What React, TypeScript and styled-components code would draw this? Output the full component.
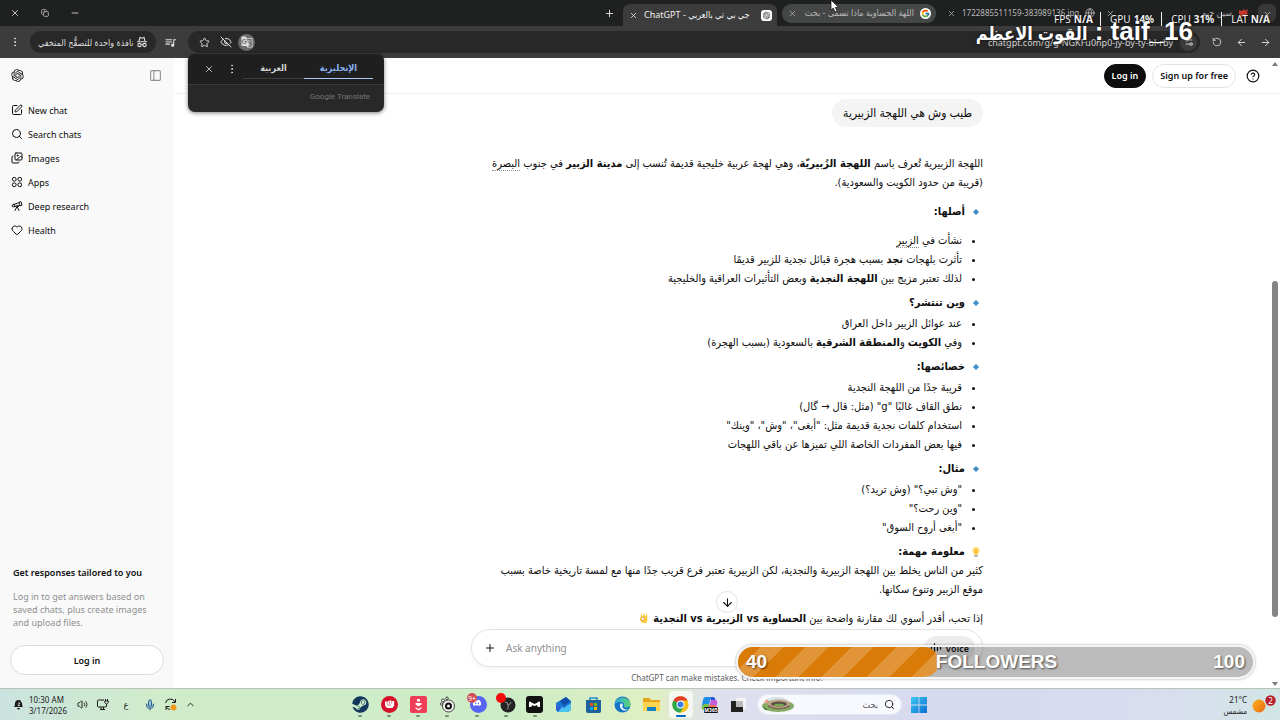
import React from "react";
import styled, { createGlobalStyle } from "styled-components";
import {
  X, Plus, Minus, Copy, Star, EyeOff, RotateCcw, ArrowLeft, ArrowRight, ArrowDown, ChevronDown, ChevronUp,
  EllipsisVertical, SquarePen, Search, Images, PanelLeft, Telescope, Heart, CircleQuestionMark, Globe,
  Volume2, Mic, Settings2,
} from "lucide-react";
import { RiOpenaiFill } from "react-icons/ri";
import { FcGoogle } from "react-icons/fc";
import { FaSteam, FaDiscord } from "react-icons/fa";
import { MdQueueMusic, MdGTranslate } from "react-icons/md";

const GlobalStyle = createGlobalStyle`
  * { box-sizing: border-box; }
  body { margin: 0; background: #fff; color: #0d0d0d; font-family: "Noto Sans", "DejaVu Sans Condensed", "DejaVu Sans", sans-serif; font-size: 9px; }
  button, input { font: inherit; color: inherit; border: 0; padding: 0; margin: 0; background: none; }
  a { color: inherit; text-decoration: none; }
  p, ul, h1, h2, h3 { margin: 0; padding: 0; font: inherit; }
  svg { display: block; flex: none; }
`;

const Screen = styled.div`
  position: relative;
  display: flex;
  flex-direction: column;
  height: 100vh;
  overflow: hidden;
`;

/* ---------- browser frame ---------- */

const TabStrip = styled.div`
  display: flex;
  align-items: center;
  height: 26px;
  padding-right: 4px;
  background: #1f2020;
  color: #e3e3e3;
`;

const WindowControls = styled.div`
  display: flex;
  flex: 1;
`;

const WindowButton = styled.button`
  display: flex;
  justify-content: center;
  align-items: center;
  width: 30px;
  height: 26px;
`;

const TabButton = styled.button<{ $filled?: boolean }>`
  display: flex;
  justify-content: center;
  align-items: center;
  width: 18px;
  height: 18px;
  border-radius: 6px;
  background: ${(p) => (p.$filled ? "#383838" : "none")};
`;

const Tabs = styled.div`
  display: flex;
  gap: 5px;
  align-self: stretch;
  align-items: center;
  padding: 0 4px 0 5px;
`;

const Tab = styled.div<{ $state: "active" | "hover" | "idle" }>`
  display: flex;
  align-items: center;
  gap: 6px;
  width: 154px;
  height: ${(p) => (p.$state === "active" ? "22px" : "19px")};
  padding: 0 5px 0 6px;
  align-self: ${(p) => (p.$state === "active" ? "flex-end" : "center")};
  border-radius: ${(p) => (p.$state === "active" ? "7px 7px 0 0" : "9px")};
  background: ${(p) => (p.$state === "active" ? "#3c3c3c" : p.$state === "hover" ? "#454646" : "none")};
  color: ${(p) => (p.$state === "active" ? "#f0f0f0" : "#b9b9b9")};
`;

const TabTitle = styled.span<{ $small?: boolean; $left?: boolean }>`
  flex: 1;
  white-space: nowrap;
  text-align: ${(p) => (p.$left ? "left" : "start")};
  font-size: ${(p) => (p.$small ? "8px" : "9px")};
  line-height: 16px;
`;

const Favicon = styled.span<{ $round?: boolean }>`
  display: flex;
  justify-content: center;
  align-items: center;
  width: 11px;
  height: 11px;
  border-radius: ${(p) => (p.$round ? "50%" : "3px")};
  background: #fff;
  color: #333;
`;

const Toolbar = styled.div`
  display: flex;
  align-items: center;
  height: 32px;
  padding-right: 3px;
  background: #3c3c3c;
  color: #dedede;
`;

const ToolButton = styled.button`
  display: flex;
  justify-content: center;
  align-items: center;
  width: 24px;
  height: 22px;
`;

const MediaButton = styled(ToolButton)`
  width: 32px;
  padding-right: 4px;
`;

const MenuButton = styled(ToolButton)`
  width: 30px;
`;

const IncognitoChip = styled.button`
  display: flex;
  justify-content: space-between;
  align-items: center;
  width: 126px;
  height: 22px;
  padding: 0 8px;
  border-radius: 11px;
  background: #282828;
  white-space: nowrap;
`;

const AddressBar = styled.div`
  display: flex;
  flex: 1;
  align-items: center;
  height: 22px;
  margin-right: 5px;
  padding: 0 3px 0 8px;
  border-radius: 11px;
  background: #282828;
`;

const AddressButton = styled.button<{ $on?: boolean }>`
  display: flex;
  justify-content: center;
  align-items: center;
  width: 17px;
  height: 17px;
  margin: 0 4px 0 0;
  border-radius: 50%;
  background: ${(p) => (p.$on ? "#6b6b6b" : "none")};
`;

const SiteButton = styled(AddressButton)`
  margin: 0;
  background: #3c3c3c;
`;

const Url = styled.input`
  flex: 1;
  min-width: 0;
  margin-right: 7px;
  text-align: right;
  color: #d0d0d0;
`;

/* ---------- translate pop-up ---------- */

const TranslatePopup = styled.section`
  position: absolute;
  top: 54px;
  left: 188px;
  width: 196px;
  border-radius: 7px;
  overflow: hidden;
  background: #282828;
  color: #d5d5d5;
  box-shadow: 0 1px 4px rgba(0, 0, 0, 0.5);
`;

const TranslateTop = styled.div`
  display: flex;
  align-items: flex-end;
  height: 31px;
  padding: 0 11px 5px 9px;
  background: #1f1f1f;
  border-bottom: 1px solid #3a3a3a;
`;

const PopupButton = styled.button`
  display: flex;
  justify-content: center;
  align-items: center;
  width: 23px;
  height: 21px;
`;

const Language = styled.button<{ $on?: boolean }>`
  width: ${(p) => (p.$on ? "69px" : "61px")};
  height: 22px;
  font-weight: 600;
  color: ${(p) => (p.$on ? "#8ab4f8" : "#d5d5d5")};
  border-bottom: 1px solid ${(p) => (p.$on ? "#a8c7fa" : "#3c3c3c")};
`;

const TranslateBrand = styled.div`
  padding: 5px 14px 0;
  height: 27px;
  text-align: right;
  font-family: Roboto, sans-serif;
  font-size: 8px;
  line-height: 14px;
  color: #757575;
`;

/* ---------- sidebar ---------- */

const Page = styled.div`
  display: flex;
  flex: 1;
  min-height: 0;
`;

const Sidebar = styled.aside`
  display: flex;
  flex-direction: column;
  width: 174px;
  background: #f9f9f9;
`;

const SidebarHeader = styled.div`
  display: flex;
  justify-content: space-between;
  align-items: center;
  height: 35px;
  padding: 0 12px 0 10px;
`;

const PanelButton = styled.button`
  color: #8f8f8f;
`;

const Nav = styled.nav`
  display: flex;
  flex-direction: column;
  padding: 5px 11px;
`;

const NavLink = styled.a`
  display: flex;
  align-items: center;
  gap: 5px;
  height: 24px;
`;

const Promo = styled.div`
  display: flex;
  flex-direction: column;
  margin-top: auto;
  padding: 0 10px 13px;
`;

const PromoTitle = styled.h2`
  padding: 0 3px;
  line-height: 14px;
  font-weight: 600;
`;

const PromoText = styled.p`
  margin: 10px 3px 16px;
  line-height: 13px;
  color: #8f8f8f;
`;

const PromoButton = styled.button`
  height: 30px;
  border: 1px solid #dedede;
  border-radius: 15px;
  background: #fff;
  font-weight: 600;
`;

/* ---------- conversation ---------- */

const Main = styled.main`
  position: relative;
  display: flex;
  flex: 1;
  flex-direction: column;
  min-width: 0;
`;

const TopBar = styled.header`
  display: flex;
  justify-content: flex-end;
  align-items: center;
  gap: 6px;
  height: 36px;
  padding-right: 20px;
  border-bottom: 1px solid #f0f0f0;
`;

const Pill = styled.button<{ $dark?: boolean }>`
  height: 24px;
  padding: 0 7px;
  border-radius: 12px;
  border: 1px solid ${(p) => (p.$dark ? "#0d0d0d" : "#e3e3e3")};
  background: ${(p) => (p.$dark ? "#0d0d0d" : "#fff")};
  color: ${(p) => (p.$dark ? "#fff" : "#0d0d0d")};
  font-weight: 600;
`;

const HelpButton = styled.button`
  margin-left: 4px;
`;

const Thread = styled.div`
  flex: 1;
  min-height: 0;
  overflow: hidden;
`;

const Column = styled.div`
  width: 100%;
  max-width: 512px;
  margin: 0 auto;
`;

const Bubble = styled.div`
  width: fit-content;
  margin: 5px 0 27px;
  padding: 4px 11px 5px;
  border-radius: 14px;
  background: #f4f4f4;
  font-size: 12px;
  line-height: 19px;
`;

const Answer = styled.article`
  font-family: "DejaVu Sans Condensed", "DejaVu Sans", sans-serif;
  font-size: 11px;
  line-height: 19px;
  white-space: nowrap;
`;

const Paragraph = styled.p<{ $spaced?: boolean }>`
  margin-bottom: ${(p) => (p.$spaced ? "10px" : "0")};
`;

const Heading = styled.h3<{ $gap: number }>`
  display: flex;
  align-items: center;
  gap: 4px;
  padding-right: 1px;
  margin-bottom: ${(p) => p.$gap}px;
  font-weight: 700;
`;

const Bullets = styled.ul`
  margin-bottom: 5px;
  padding-right: 21px;
`;

const Place = styled.a`
  border-bottom: 1px dotted #8f8f8f;
`;

const EmojiInline = styled.span`
  display: inline-block;
  vertical-align: -2px;
  margin-right: 4px;
`;

const ScrollDown = styled.button`
  position: absolute;
  left: 50%;
  bottom: 75px;
  display: flex;
  justify-content: center;
  align-items: center;
  width: 22px;
  height: 22px;
  margin-left: -11px;
  border: 1px solid #e3e3e3;
  border-radius: 50%;
  background: #fff;
`;

const Composer = styled.form`
  display: flex;
  align-items: center;
  gap: 10px;
  height: 38px;
  padding: 0 7px 0 12px;
  border: 1px solid #e3e3e3;
  border-radius: 19px;
  background: #fff;
  box-shadow: 0 2px 5px rgba(0, 0, 0, 0.05);
`;

const Prompt = styled.input`
  flex: 1;
  outline: 0;
  font-size: 10px;
  &::placeholder { color: #8f8f8f; opacity: 1; }
`;

const VoiceButton = styled.button`
  display: flex;
  align-items: center;
  gap: 4px;
  height: 24px;
  padding: 0 6px;
  border-radius: 12px;
  background: #ececec;
  font-weight: 600;
`;

const Disclaimer = styled.p`
  height: 21px;
  text-align: center;
  font-size: 8px;
  line-height: 21px;
  color: #5d5d5d;
`;

const Scrollbar = styled.div`
  position: absolute;
  top: 0;
  right: 0;
  bottom: 0;
  display: flex;
  flex-direction: column;
  justify-content: space-between;
  align-items: center;
  width: 10px;
  padding: 4px 0 2px;
`;

const ScrollThumb = styled.div`
  width: 6px;
  height: 54%;
  margin-top: 150px;
  border-radius: 3px;
  background: #858585;
`;

/* ---------- task bar ---------- */

const TaskBar = styled.footer`
  display: grid;
  grid-template-columns: 1fr 584px 1fr;
  align-items: center;
  height: 32px;
  border-top: 1px solid #b9c4b9;
  background: linear-gradient(90deg, #cbe3e0 0%, #d0ecca 12%, #cdedc6 40%, #e0efc2 51%, #dfe0ee 56%, #d6d9ef 75%, #dadcf0 90%, #d1e6e4 100%);
  color: #1b1b1b;
`;

const Tray = styled.div`
  display: flex;
  align-items: center;
  padding-left: 13px;
`;

const Clock = styled.time`
  width: 43px;
  margin: 0 0 0 5px;
  font-size: 8px;
  line-height: 11px;
  white-space: pre-line;
`;

const TrayButton = styled.button<{ $wide?: boolean }>`
  display: flex;
  justify-content: center;
  align-items: center;
  width: ${(p) => (p.$wide ? "28px" : "20px")};
  height: 24px;
`;

const AppsRow = styled.div`
  display: flex;
  align-items: center;
`;

const Apps = styled.div`
  display: flex;
  flex: 1;
  justify-content: space-between;
  margin-right: 6px;
`;

const AppButton = styled.button<{ $mark?: "dot" | "bar" }>`
  display: flex;
  flex-direction: column;
  align-items: center;
  gap: 2px;
  width: 24px;
  padding: 5px 0 1px;
  border-radius: 4px;
  background: ${(p) => (p.$mark === "bar" ? "rgba(255,255,255,.65)" : "none")};
  &::after {
    content: "";
    width: ${(p) => (p.$mark === "bar" ? "10px" : "4px")};
    height: 2px;
    border-radius: 1px;
    background: ${(p) => (p.$mark === "bar" ? "#0067c0" : p.$mark ? "#77907a" : "transparent")};
  }
`;

const TaskSearch = styled.label`
  display: flex;
  align-items: center;
  gap: 6px;
  width: 145px;
  height: 21px;
  padding: 0 6px 0 3px;
  border: 1px solid #e6e9f4;
  border-radius: 11px;
  background: #f8f9fe;
`;

const TaskSearchInput = styled.input`
  flex: 1;
  min-width: 0;
  &::placeholder { color: #5d5d5d; opacity: 1; }
`;

const StartButton = styled.button`
  margin: 0 5px 0 9px;
`;

const Weather = styled.button`
  display: flex;
  justify-content: flex-end;
  align-items: center;
  gap: 5px;
  padding-right: 4px;
  text-align: right;
  font-size: 8px;
  line-height: 11px;
`;

/* ---------- stream overlays ---------- */

const Stats = styled.div`
  position: absolute;
  top: 12px;
  right: 10px;
  display: flex;
  font-size: 10px;
  line-height: 14px;
  color: #f3f3f3;
  text-shadow: 0 0 2px #000;
`;

const Stat = styled.span`
  & + & { margin-left: 7px; padding-left: 9px; border-left: 1px solid #f3f3f3; }
  b { margin-left: 3px; }
`;

const StreamName = styled.div`
  position: absolute;
  top: 15px;
  right: 87px;
  font-family: "Liberation Sans", "DejaVu Sans Condensed", sans-serif;
  font-size: 26px;
  line-height: 32px;
  font-weight: 700;
  white-space: nowrap;
  color: #fff;
  text-shadow: 0 0 3px rgba(0, 0, 0, 0.7);
  span { font-size: 18px; }
`;

const Goal = styled.div`
  position: absolute;
  right: 25px;
  bottom: 41px;
  display: flex;
  align-items: center;
  width: 519px;
  height: 34px;
  border: 2px solid #f4f4f4;
  border-radius: 17px;
  background: rgba(20, 20, 20, 0.29);
  box-shadow: 0 0 3px rgba(0, 0, 0, 0.35);
  color: #fff;
  font-family: "Liberation Sans", sans-serif;
  font-size: 19px;
  line-height: 30px;
  font-weight: 700;
  text-shadow: 1px 1px 2px rgba(0, 0, 0, 0.6);
`;

const GoalFill = styled.div`
  width: 39%;
  height: 30px;
  padding-left: 8px;
  border-radius: 15px;
  background: repeating-linear-gradient(135deg, #d97b06 0 16px, #e29538 16px 32px);
`;

const GoalName = styled.div`
  flex: 1;
  margin-left: -3px;
`;

const GoalTarget = styled.div`
  padding-right: 8px;
`;

const Pointer = styled.svg`
  position: absolute;
  top: 0;
  left: 830px;
`;

/* ---------- drawings ---------- */

const Incognito = () => (
  <svg width="12" height="12" viewBox="0 0 24 24" fill="none" stroke="currentColor" strokeWidth="2.2">
    <path d="M6 10 8 3l4 1.500L16 3l2 7M2 11.500h20" />
    <circle cx="7" cy="18" r="3.300" /><circle cx="17" cy="18" r="3.300" /><path d="M10.300 17.500q1.700-1.200 3.400 0" />
  </svg>
);
const Apps4 = () => (
  <svg width="12" height="12" viewBox="0 0 24 24" fill="none" stroke="currentColor" strokeWidth="2">
    <circle cx="6.500" cy="6.500" r="3.800" /><circle cx="17.500" cy="6.500" r="3.800" />
    <circle cx="6.500" cy="17.500" r="3.800" /><circle cx="17.500" cy="17.500" r="3.800" />
  </svg>
);
const Diamond = () => (
  <svg width="13" height="12" viewBox="0 0 13 12"><path d="M7 3.500 9.500 6 7 8.500 4.500 6z" fill="#3b88c3" stroke="#3b88c3" strokeLinejoin="round" /></svg>
);
const Bulb = () => (
  <svg width="13" height="12" viewBox="0 0 13 12">
    <path d="M7 1a3.500 3.500 0 0 0-2 6.300V9h4V7.300A3.500 3.500 0 0 0 7 1z" fill="#ffd45c" /><path d="M5.500 9h3v2h-3z" fill="#a3adb5" />
    <path d="M6 4l1 1 1-1M7 5v3" stroke="#e8a52d" strokeWidth=".7" fill="none" />
  </svg>
);
const OkHand = () => (
  <svg width="10" height="12" viewBox="0 0 10 12">
    <path d="M2.500 1l1.300 4L5 .800l1 4L8 1.500l.5 6-1 3.500h-4L1 8z" fill="#ffc83d" />
    <circle cx="3.800" cy="6.800" r="1.700" fill="#fff" stroke="#e39b2d" strokeWidth=".9" />
  </svg>
);
const Wave = () => (
  <svg width="12" height="12" viewBox="0 0 12 12" stroke="currentColor" strokeWidth="1.300" strokeLinecap="round">
    <path d="M1.500 5v2M4.500 2v8M7.500 3.500v5M10.500 5v2" />
  </svg>
);
const Bell = () => (
  <svg width="11" height="11" viewBox="0 0 11 11">
    <path d="M1 8q1-1 1-4 .5-3 3.500-3T9 4q0 3 1 4z" fill="#1b1b1b" /><path d="M4 9h3q-.5 1.500-1.500 1.500T4 9z" fill="#1b1b1b" />
    <path d="M5 4h2L5 6.500h2M8 .700h2L8 2.800h2" stroke="#d9ece0" strokeWidth=".8" fill="none" />
  </svg>
);
const Network = () => (
  <svg width="13" height="13" viewBox="0 0 13 13" fill="none" stroke="#1b1b1b">
    <path d="M8 2H2.500Q1.500 2 1.500 3v5q0 1 1 1h7q1 0 1-1V7M4 11.500h5M5 9v2M7.500 9v2" /><path d="M9.500 1v2M11.500 1v2M8.800 3h3.500v1.500q-1 1.500-1.800 1.500-.9 0-1.700-1.500zM10.500 6v2" />
  </svg>
);
const Sync = () => (
  <svg width="13" height="13" viewBox="0 0 13 13" fill="none" stroke="#1b1b1b">
    <path d="M1.500 5A5 5 0 0 1 11 4M11.500 1v3.500H8M2 12V8.500h3.500M2 8.500q1 2.500 4 3" /><circle cx="9.500" cy="9.500" r="3" fill="#ef9a1a" stroke="none" />
  </svg>
);
const Razer = () => (
  <svg width="17" height="17" viewBox="0 0 17 17">
    <circle cx="8.500" cy="8.500" r="8.500" fill="#d5122c" />
    <path d="M4 5.500h2.200V5h2.100v-.500h2.200V5h2.700v4.500L11.500 12H6L4 9.500z" fill="#fff" />
    <path d="M6.200 5v2.500M8.400 5v2.500M10.700 5v2.500M6 9h4" stroke="#d5122c" strokeWidth=".6" />
  </svg>
);
const RedDown = () => (
  <svg width="17" height="17" viewBox="0 0 17 17">
    <rect width="17" height="17" rx="2" fill="#ef3d58" />
    <path d="M7 3h3v2.500H7zM5.500 7h6v1.500l-3 2-3-2zM5.500 11l3 2 3-2v1.500l-3 2-3-2z" fill="#fff" />
  </svg>
);
const SteelSeries = () => (
  <svg width="17" height="17" viewBox="0 0 17 17" stroke="#444" fill="#f3f5ef">
    <circle cx="4" cy="4.500" r="1.500" /><circle cx="8" cy="2.300" r="1.300" /><circle cx="2.500" cy="8" r="1.200" />
    <circle cx="9.500" cy="10" r="6" /><circle cx="9.500" cy="10" r="2.500" strokeWidth="2" stroke="#111" />
  </svg>
);
const Discord = () => (
  <svg width="22" height="17" viewBox="0 0 22 17" overflow="visible">
    <circle cx="12.500" cy="8.500" r="8.500" fill="#5865f2" />
    <FaDiscord x="6.500" y="2.500" width="12" height="12" color="#fff" />
    <circle cx="6" cy="2" r="5" fill="#d14b52" />
    <text x="6" y="5" fill="#fff" fontSize="7" textAnchor="middle">9+</text>
  </svg>
);
const Obs = () => (
  <svg width="20" height="17" viewBox="0 0 20 17" overflow="visible">
    <circle cx="12" cy="9" r="7.500" fill="#242424" />
    <path d="M12 9q0-3-3-3M12 9q3-1 3-3M12 9q1 3-1 4.500" stroke="#999" fill="none" />
    <circle cx="5" cy="2" r="5" fill="#f20d0d" />
  </svg>
);
const Mask = () => (
  <svg width="17" height="17" viewBox="0 0 17 17">
    <rect width="17" height="17" rx="3" fill="#111" />
    <path d="M3 6q1-1 2.500.500L8.500 8l3-1.500Q13 5 14 6v5h-2l-1.500-2-2 1.200-2-1.200L5 11H3z" fill="#fff" />
  </svg>
);
const Outlook = () => (
  <svg width="17" height="17" viewBox="0 0 17 17">
    <path d="M1 7l10-6 5 4v9l-3 2H3l-2-2z" fill="#1774d1" /><path d="M1 8l8 4 7-5v7l-3 2H3l-2-2z" fill="#4cc2f1" />
    <path d="M5 5l6-4 4 4-6 5z" fill="#0f4da8" /><path d="M1 8l6 3-4 5-2-2z" fill="#2b63d6" />
  </svg>
);
const Store = () => (
  <svg width="17" height="17" viewBox="0 0 17 17">
    <path d="M5 4V2h7v2" stroke="#2689c9" strokeWidth="1.500" fill="none" /><path d="M1 4h15v11q0 2-2 2H3q-2 0-2-2z" fill="#1d6298" />
    <path d="M5 7h3v3H5z" fill="#f25022" /><path d="M9 7h3v3H9z" fill="#7fba00" /><path d="M5 11h3v3H5z" fill="#00a4ef" /><path d="M9 11h3v3H9z" fill="#ffb900" />
  </svg>
);
const Edge = () => (
  <svg width="17" height="17" viewBox="0 0 17 17">
    <defs><linearGradient id="edgeTop"><stop stopColor="#2fa8e0" /><stop offset="1" stopColor="#5bd66c" /></linearGradient></defs>
    <circle cx="8.500" cy="8.500" r="8" fill="#1474c4" />
    <path d="M.7 8A8 8 0 0 1 16.500 8.500q-.5 3-4 3-3 0-2.500-2 .5-3-3-3.500Q3 5.700.7 8z" fill="url(#edgeTop)" />
    <path d="M7 7q-3 4 1.500 7 3 1.500 6-.8-3 .8-5-.7-2-2-.5-4z" fill="#e8f5ff" />
  </svg>
);
const Folder = () => (
  <svg width="17" height="17" viewBox="0 0 17 17">
    <path d="M0 3q0-1 1-1h5l2 2h8q1 0 1 1v9q0 1-1 1H1q-1 0-1-1z" fill="#e8a317" /><path d="M0 6h17v8q0 1-1 1H1q-1 0-1-1z" fill="#ffd352" />
    <path d="M4 11h9v4H4z" fill="#1683c8" />
  </svg>
);
const Chrome = () => (
  <svg width="17" height="17" viewBox="0 0 48 48">
    <circle cx="24" cy="24" r="23" fill="#fbc116" />
    <path d="M24 24 4 12.500A23 23 0 0 1 44 12.500H24z" fill="#e33b2e" /><path d="M4 12.500A23 23 0 0 0 23 47l11-18-10-5z" fill="#2da94f" />
    <circle cx="24" cy="24" r="11" fill="#fff" /><circle cx="24" cy="24" r="8.500" fill="#3f7ee8" />
  </svg>
);
const Copilot = () => (
  <svg width="17" height="17" viewBox="0 0 17 17">
    <path d="M4 1h6l-3 12H3q-3 0-2-4l1-5q.5-3 2-3z" fill="#1f8fe5" /><path d="M3 8h5l-2 6H3q-3 0-2-4z" fill="#7bc043" />
    <path d="M10 1h2q2 0 2.500 3h-5z" fill="#2a55d4" /><path d="M10 4h4q3 0 2 4l-1 4q-1 2-3 2H7z" fill="#c65bdc" /><path d="M8 9h7l-1 4H7z" fill="#f2754f" />
    <rect x="3" y="11" width="14" height="6" rx="1" fill="#111" />
    <text x="10" y="16" fontSize="5" fontWeight="700" fill="#fff" textAnchor="middle">M365</text>
  </svg>
);
const TaskView = () => (
  <svg width="17" height="17" viewBox="0 0 17 17"><path d="M6 2h10v11H6z" fill="#f3f3f5" /><path d="M1 5h5v6h7v5H1z" fill="#222" /><path d="M6 5h7v6H6z" fill="#bbb" /></svg>
);
const Stadium = () => (
  <svg width="34" height="17" viewBox="0 0 34 17">
    <ellipse cx="16" cy="6" rx="12" ry="5" fill="#d5e3ea" /><ellipse cx="17" cy="10" rx="16" ry="6" fill="#86ab62" />
    <ellipse cx="18" cy="8" rx="11" ry="4.500" fill="#c2a58a" /><ellipse cx="18" cy="8" rx="8" ry="2.500" fill="#5b5148" />
    <ellipse cx="18" cy="9" rx="5" ry="1.200" fill="#76a94c" /><path d="M7 9q11 6 22 0v2q-11 5-22 0z" fill="#7a6f58" />
    <path d="M3 6l3-3 2 2-3 3z" fill="#e7a08e" /><path d="M2 10l5 4h-3z" fill="#4f7d3c" />
  </svg>
);
const WindowsLogo = () => (
  <svg width="16" height="16" viewBox="0 0 16 16">
    <defs><linearGradient id="win" x2="1" y2="1"><stop stopColor="#41c8f5" /><stop offset="1" stopColor="#0a6fd0" /></linearGradient></defs>
    <path d="M0 0h7.600v7.600H0zM8.400 0H16v7.600H8.400zM0 8.400h7.600V16H0zM8.400 8.400H16V16H8.400z" fill="url(#win)" />
  </svg>
);
const Sun = () => (
  <svg width="24" height="20" viewBox="0 0 24 20">
    <defs><linearGradient id="sun" x2="1" y2="1"><stop stopColor="#fbb21c" /><stop offset="1" stopColor="#ea6a14" /></linearGradient></defs>
    <circle cx="7" cy="11" r="6.500" fill="url(#sun)" /><circle cx="18.500" cy="5.500" r="5.200" fill="#b5202c" />
    <text x="18.500" y="8.500" fontSize="8" fill="#fff" textAnchor="middle">2</text>
  </svg>
);
const Flame = () => (
  <svg width="11" height="11" viewBox="0 0 11 11"><path d="M1 2l3 1 2-2 1 2 3-2-1 4 1 1-2 1-1 3-2-2-3 2 1-3-2-1z" fill="#c9392b" /></svg>
);
const Triangle = ({ down }: { down?: boolean }) => (
  <svg width="6" height="4" viewBox="0 0 6 4"><path d={down ? "M0 0h6L3 4z" : "M3 0l3 4H0z"} fill="#7a7a7a" /></svg>
);

const navItems = [
  { label: "New chat", icon: <SquarePen size={12} /> },
  { label: "Search chats", icon: <Search size={12} /> },
  { label: "Images", icon: <Images size={12} /> },
  { label: "Apps", icon: <Apps4 /> },
  { label: "Deep research", icon: <Telescope size={12} /> },
  { label: "Health", icon: <Heart size={12} /> },
];

const apps: { name: string; icon: React.ReactNode; mark?: "dot" | "bar" }[] = [
  { name: "Steam", icon: <FaSteam size={17} color="#12385e" />, mark: "dot" },
  { name: "Razer", icon: <Razer />, mark: "dot" },
  { name: "Downloads", icon: <RedDown />, mark: "dot" },
  { name: "SteelSeries", icon: <SteelSeries />, mark: "dot" },
  { name: "Discord", icon: <Discord />, mark: "dot" },
  { name: "OBS", icon: <Obs />, mark: "dot" },
  { name: "Mask", icon: <Mask />, mark: "dot" },
  { name: "Outlook", icon: <Outlook /> },
  { name: "Store", icon: <Store /> },
  { name: "Edge", icon: <Edge /> },
  { name: "Files", icon: <Folder /> },
  { name: "Chrome", icon: <Chrome />, mark: "bar" },
  { name: "Copilot", icon: <Copilot /> },
  { name: "Task view", icon: <TaskView /> },
];

export default function App() {
  return (
    <Screen>
      <GlobalStyle />
      <TabStrip>
        <WindowControls>
          <WindowButton aria-label="Close"><X size={10} /></WindowButton>
          <WindowButton aria-label="Restore"><Copy size={8} /></WindowButton>
          <WindowButton aria-label="Minimize"><Minus size={10} /></WindowButton>
        </WindowControls>
        <TabButton aria-label="New tab"><Plus size={11} /></TabButton>
        <Tabs>
          <Tab $state="active">
            <X size={9} />
            <TabTitle dir="rtl" $left>جي بي تي بالعربي - ChatGPT</TabTitle>
            <Favicon><RiOpenaiFill size={9} /></Favicon>
          </Tab>
          <Tab $state="hover">
            <X size={9} />
            <TabTitle dir="rtl">اللهة الحساوية ماذا تسمى - بحث</TabTitle>
            <Favicon $round><FcGoogle size={9} /></Favicon>
          </Tab>
          <Tab $state="idle">
            <X size={9} />
            <TabTitle $small>1722885511159-383989136.jpg</TabTitle>
            <Globe size={10} />
          </Tab>
          <Tab $state="idle">
            <X size={9} />
            <TabTitle dir="rtl">سين جيم</TabTitle>
            <Flame />
          </Tab>
        </Tabs>
        <TabButton $filled aria-label="Search tabs"><ChevronDown size={9} /></TabButton>
      </TabStrip>
      <Toolbar>
        <MenuButton aria-label="Menu"><EllipsisVertical size={12} /></MenuButton>
        <IncognitoChip><span dir="rtl">نافذة واحدة للتصفُّح المتخفي</span><Incognito /></IncognitoChip>
        <MediaButton aria-label="Media"><MdQueueMusic size={13} /></MediaButton>
        <AddressBar>
          <AddressButton aria-label="Bookmark"><Star size={11} /></AddressButton>
          <AddressButton aria-label="Tracking"><EyeOff size={12} /></AddressButton>
          <AddressButton $on aria-label="Translate"><MdGTranslate size={12} /></AddressButton>
          <Url aria-label="Address" defaultValue="chatgpt.com/g/g-NGKFu0np0-jy-by-ty-bl-rby" />
          <SiteButton aria-label="Site settings"><Settings2 size={10} /></SiteButton>
        </AddressBar>
        <ToolButton aria-label="Reload"><RotateCcw size={10} /></ToolButton>
        <ToolButton aria-label="Back"><ArrowLeft size={11} /></ToolButton>
        <ToolButton aria-label="Forward"><ArrowRight size={11} /></ToolButton>
      </Toolbar>

      <Page>
        <Sidebar>
          <SidebarHeader>
            <RiOpenaiFill size={15} />
            <PanelButton aria-label="Toggle sidebar"><PanelLeft size={13} /></PanelButton>
          </SidebarHeader>
          <Nav>
            {navItems.map((n) => (
              <NavLink href="#" key={n.label}>{n.icon}{n.label}</NavLink>
            ))}
          </Nav>
          <Promo>
            <PromoTitle>Get responses tailored to you</PromoTitle>
            <PromoText>Log in to get answers based on saved chats, plus create images and upload files.</PromoText>
            <PromoButton>Log in</PromoButton>
          </Promo>
        </Sidebar>

        <Main>
          <TopBar>
            <Pill $dark>Log in</Pill>
            <Pill>Sign up for free</Pill>
            <HelpButton aria-label="Help"><CircleQuestionMark size={14} /></HelpButton>
          </TopBar>
          <Thread>
            <Column dir="rtl">
              <Bubble>طيب وش هي اللهجة الزبيرية</Bubble>
              <Answer>
                <Paragraph $spaced>
                  اللهجة الزبيرية تُعرف باسم <b>اللهجة الزُبيريّة</b>، وهي لهجة عربية خليجية قديمة تُنسب إلى <b>مدينة الزبير</b> في جنوب <Place href="#">البصرة</Place>
                  <br />(قريبة من حدود الكويت والسعودية).
                </Paragraph>
                <Heading $gap={10}><Diamond />أصلها:</Heading>
                <Bullets>
                  <li>نشأت في <Place href="#">الزبير</Place></li>
                  <li>تأثرت بلهجات <b>نجد</b> بسبب هجرة قبائل نجدية للزبير قديمًا</li>
                  <li>لذلك تعتبر مزيج بين <b>اللهجة النجدية</b> وبعض التأثيرات العراقية والخليجية</li>
                </Bullets>
                <Heading $gap={2}><Diamond />وين تنتشر؟</Heading>
                <Bullets>
                  <li>عند عوائل الزبير داخل العراق</li>
                  <li>وفي <b>الكويت</b> و<b>المنطقة الشرقية</b> بالسعودية (بسبب الهجرة)</li>
                </Bullets>
                <Heading $gap={2}><Diamond />خصائصها:</Heading>
                <Bullets>
                  <li>قريبة جدًا من اللهجة النجدية</li>
                  <li>نطق القاف غالبًا "g" (مثل: قال → گال)</li>
                  <li>استخدام كلمات نجدية قديمة مثل: "أبغى"، "وش"، "وينك"</li>
                  <li>فيها بعض المفردات الخاصة اللي تميزها عن باقي اللهجات</li>
                </Bullets>
                <Heading $gap={2}><Diamond />مثال:</Heading>
                <Bullets>
                  <li>"وش تبي؟" (وش تريد؟)</li>
                  <li>"وين رحت؟"</li>
                  <li>"أبغى أروح السوق"</li>
                </Bullets>
                <Heading as="p" $gap={0}><Bulb />معلومة مهمة:</Heading>
                <Paragraph $spaced>
                  كثير من الناس يخلط بين اللهجة الزبيرية والنجدية، لكن الزبيرية تعتبر فرع قريب جدًا منها مع لمسة تاريخية خاصة بسبب
                  <br />موقع الزبير وتنوع سكانها.
                </Paragraph>
                <Paragraph>
                  إذا تحب، أقدر أسوي لك مقارنة واضحة بين <b>الحساوية vs الزبيرية vs النجدية</b>
                  <EmojiInline><OkHand /></EmojiInline>
                </Paragraph>
              </Answer>
            </Column>
          </Thread>
          <Column>
            <Composer>
              <Plus size={12} />
              <Prompt aria-label="Message" placeholder="Ask anything" />
              <VoiceButton type="button"><Wave />Voice</VoiceButton>
            </Composer>
            <Disclaimer>ChatGPT can make mistakes. Check important info.</Disclaimer>
          </Column>
          <ScrollDown aria-label="Scroll to bottom"><ArrowDown size={13} /></ScrollDown>
          <Scrollbar><Triangle /><ScrollThumb /><Triangle down /></Scrollbar>
        </Main>
      </Page>

      <TaskBar>
        <Tray>
          <Bell />
          <Clock>{"10:30 AM\n3/17/2026"}</Clock>
          <TrayButton aria-label="Volume"><Volume2 size={11} /></TrayButton>
          <TrayButton aria-label="Network"><Network /></TrayButton>
          <TrayButton $wide>ع</TrayButton>
          <TrayButton aria-label="Microphone"><Mic size={12} color="#2b5f86" fill="#9cc3dc" /></TrayButton>
          <TrayButton aria-label="Updates"><Sync /></TrayButton>
          <TrayButton aria-label="Hidden icons"><ChevronUp size={11} /></TrayButton>
        </Tray>
        <AppsRow>
          <Apps>
            {apps.map((a) => (
              <AppButton key={a.name} aria-label={a.name} $mark={a.mark}>{a.icon}</AppButton>
            ))}
          </Apps>
          <TaskSearch>
            <Stadium />
            <TaskSearchInput dir="rtl" aria-label="بحث" placeholder="بحث" />
            <Search size={11} />
          </TaskSearch>
          <StartButton aria-label="Start"><WindowsLogo /></StartButton>
        </AppsRow>
        <Weather><span>21°C<br />مشمس</span><Sun /></Weather>
      </TaskBar>

      <TranslatePopup>
        <TranslateTop>
          <PopupButton aria-label="Close"><X size={10} /></PopupButton>
          <PopupButton aria-label="Options"><EllipsisVertical size={12} /></PopupButton>
          <Language>العربية</Language>
          <Language $on>الإنجليزية</Language>
        </TranslateTop>
        <TranslateBrand>Google Translate</TranslateBrand>
      </TranslatePopup>

      <Stats>
        <Stat>FPS<b>N/A</b></Stat>
        <Stat>GPU<b>14%</b></Stat>
        <Stat>CPU<b>31%</b></Stat>
        <Stat>LAT<b>N/A</b></Stat>
      </Stats>
      <StreamName dir="rtl">taif_16 : <span>القوت الاعظم</span></StreamName>
      <Pointer width="10" height="13" viewBox="0 0 10 13"><path d="M1 0v10l2.300-2 1.700 4 2-1-1.700-3.700H8.500z" fill="#fff" stroke="#111" strokeWidth=".7" /></Pointer>
      <Goal>
        <GoalFill>40</GoalFill>
        <GoalName>FOLLOWERS</GoalName>
        <GoalTarget>100</GoalTarget>
      </Goal>
    </Screen>
  );
}
